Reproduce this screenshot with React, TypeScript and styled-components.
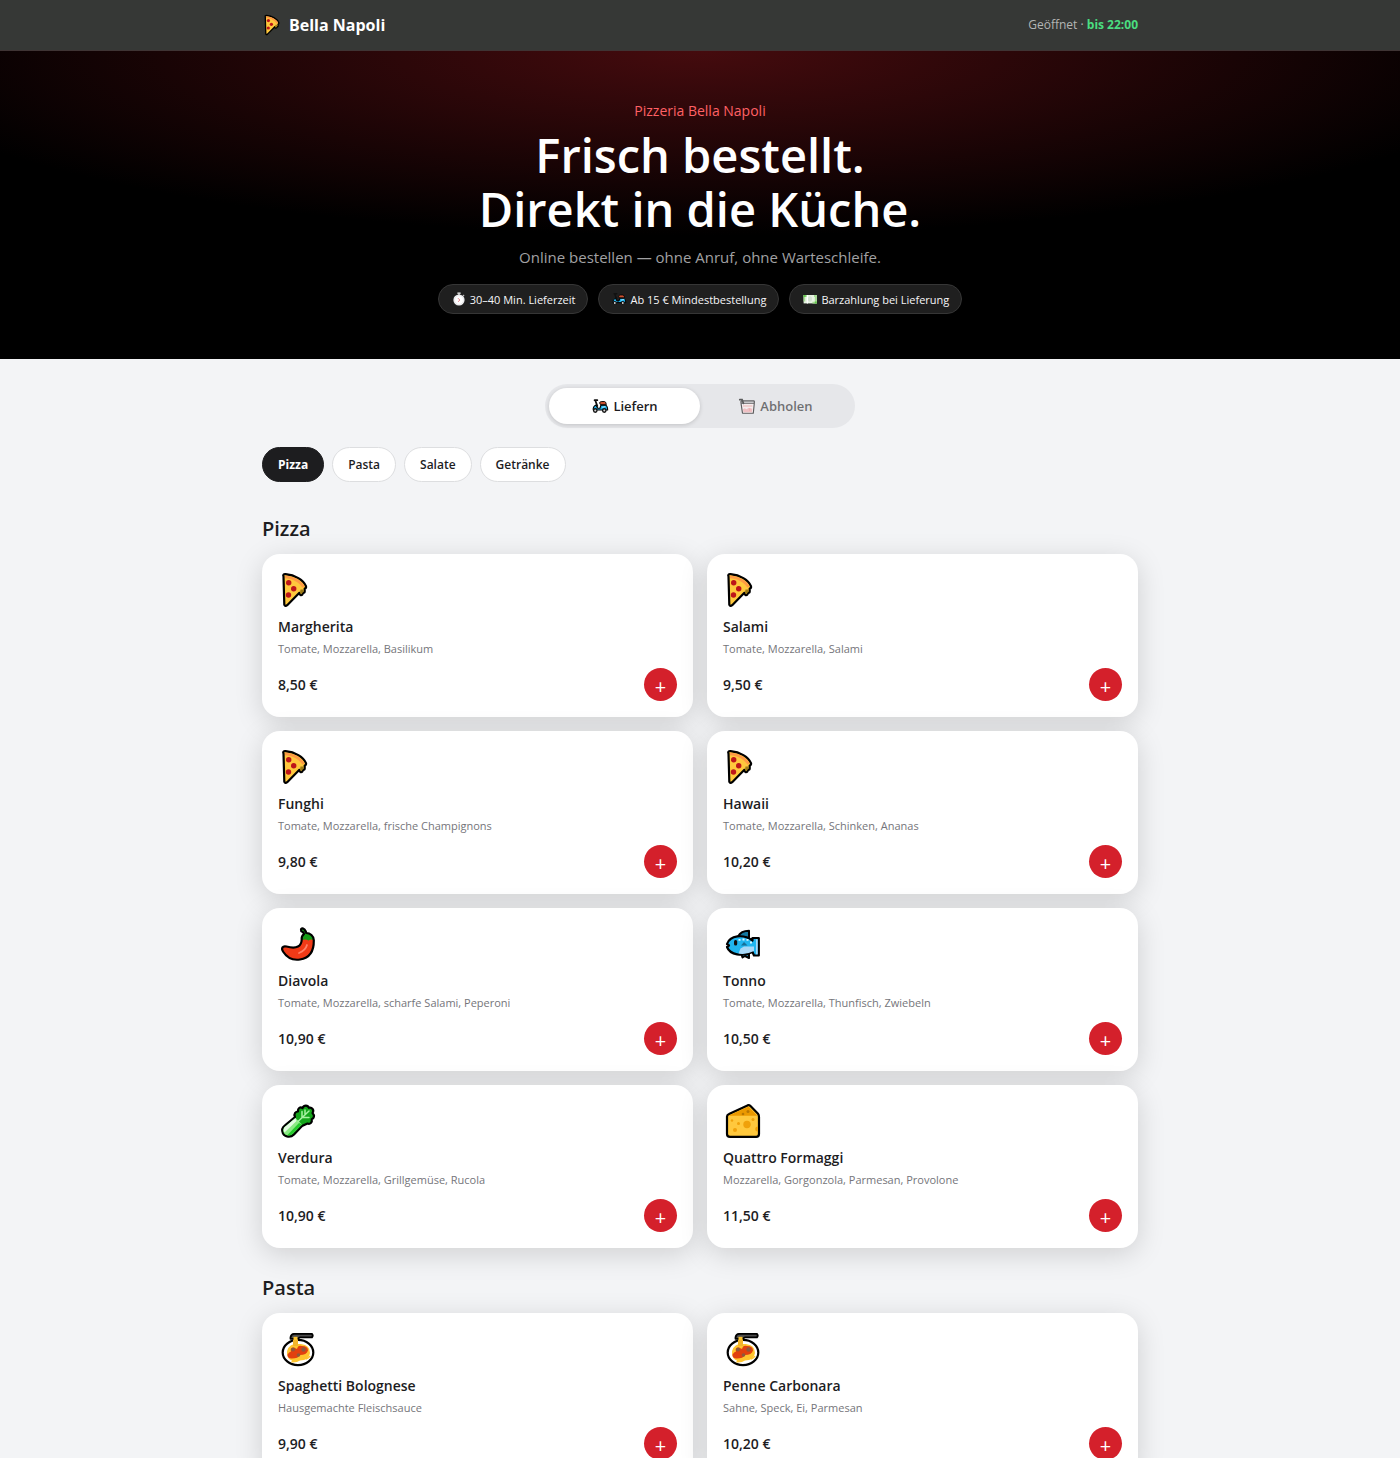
import React, { useState } from "react";
import styled, { createGlobalStyle, css } from "styled-components";

const GlobalStyle = createGlobalStyle`
  *, *::before, *::after { box-sizing: border-box; }
  body {
    margin: 0;
    background: #f3f4f6;
    color: #1d1d1f;
    font-family: "Segoe UI", "Open Sans", "Noto Sans", sans-serif;
    font-size: 14px;
  }
  h1, h2, h3, p { margin: 0; }
  button { font: inherit; color: inherit; border: 0; cursor: pointer; }
`;

const Container = styled.div`
  width: min(876px, 100% - 32px);
  margin: 0 auto;
`;

const TopBar = styled.header`
  background: #363836;
  border-bottom: 1px solid #3f3434;
`;

const TopBarInner = styled(Container)`
  display: flex;
  align-items: center;
  justify-content: space-between;
  height: 50px;
`;

const Brand = styled.a`
  display: flex;
  align-items: center;
  gap: 3px;
  color: #fff;
  font-size: 16px;
  font-weight: 700;
  text-decoration: none;
`;

const OpenStatus = styled.p`
  color: #b4b5b4;
  font-size: 12px;
  line-height: 18px;

  strong {
    color: #4ade80;
    font-weight: 700;
  }
`;

const Hero = styled.section`
  display: flex;
  flex-direction: column;
  align-items: center;
  padding: 50px 16px 45px;
  background: radial-gradient(ellipse 60% 60% at 50% 0, #450b0e, #000) #000;
  text-align: center;
`;

const Eyebrow = styled.p`
  color: #ff6165;
  font-size: 14px;
  line-height: 20px;
`;

const HeroTitle = styled.h1`
  margin-top: 7px;
  color: #fff;
  font-size: 47px;
  font-weight: 600;
  line-height: 54px;
`;

const HeroText = styled.p`
  margin-top: 8px;
  color: #a1a1a3;
  font-size: 15px;
  line-height: 26px;
`;

const FactList = styled.ul`
  display: flex;
  flex-wrap: wrap;
  justify-content: center;
  gap: 10px;
  margin: 14px 0 0;
  padding: 0;
  list-style: none;
`;

const Fact = styled.li`
  display: flex;
  align-items: center;
  gap: 3px;
  height: 30px;
  padding: 0 12px;
  border: 1px solid #363636;
  border-radius: 15px;
  background: #1f1f1f;
  color: #f5f5f7;
  font-size: 11px;
  font-weight: 500;
`;

const Main = styled(Container).attrs({ as: "main" })`
  padding-top: 25px;
`;

const ModeSwitch = styled.div`
  display: grid;
  grid-template-columns: 1fr 1fr;
  width: min(310px, 100%);
  margin: 0 auto;
  padding: 4px;
  border-radius: 22px;
  background: #e6e7ea;
`;

const ModeButton = styled.button<{ $active: boolean }>`
  display: flex;
  align-items: center;
  justify-content: center;
  gap: 4px;
  height: 36px;
  border-radius: 18px;
  background: transparent;
  font-size: 13px;
  font-weight: 600;
  opacity: 0.6;

  ${({ $active }) =>
    $active &&
    css`
      background: #fff;
      box-shadow: 0 1px 4px rgba(0, 0, 0, 0.16);
      opacity: 1;
    `}
`;

const CategoryNav = styled.nav`
  display: flex;
  flex-wrap: wrap;
  gap: 8px;
  margin: 19px 0 7px;
`;

const CategoryLink = styled.a<{ $active: boolean }>`
  display: flex;
  align-items: center;
  height: 35px;
  padding: 0 15px;
  border: 1px solid ${({ $active }) => ($active ? "#1d1d1f" : "#dddee0")};
  border-radius: 18px;
  background: ${({ $active }) => ($active ? "#1d1d1f" : "#fff")};
  color: ${({ $active }) => ($active ? "#fff" : "#1d1d1f")};
  font-size: 12px;
  font-weight: ${({ $active }) => ($active ? 700 : 600)};
  text-decoration: none;
`;

const MenuSection = styled.section`
  padding-top: 25px;
`;

const SectionTitle = styled.h2`
  margin-bottom: 10px;
  font-size: 20px;
  font-weight: 600;
  line-height: 30px;
`;

const CardGrid = styled.div`
  display: grid;
  grid-template-columns: repeat(auto-fit, minmax(min(320px, 100%), 1fr));
  gap: 14px;
`;

const Card = styled.article`
  display: flex;
  flex-direction: column;
  padding: 16px;
  border-radius: 18px;
  background: #fff;
  box-shadow: 0 6px 28px rgba(0, 0, 0, 0.15);
`;

const DishName = styled.h3`
  margin-top: 6px;
  font-size: 14px;
  font-weight: 600;
  line-height: 22px;
`;

const DishText = styled.p`
  margin-top: 2px;
  color: #75757a;
  font-size: 11px;
  line-height: 18px;
`;

const CardFooter = styled.div`
  display: flex;
  align-items: center;
  justify-content: space-between;
  margin-top: 10px;
`;

const Price = styled.span`
  font-size: 14px;
  font-weight: 600;
`;

const AddButton = styled.button`
  display: grid;
  place-items: center;
  width: 33px;
  height: 33px;
  padding: 4px 0 0;
  border-radius: 50%;
  background: #d4202b;
  color: #fff;
  font-size: 20px;
  line-height: 20px;
`;

const IconSvg = styled.svg<{ $size: number }>`
  display: block;
  flex: none;
  width: ${({ $size }) => $size}px;
  height: ${({ $size }) => $size}px;
`;

type IconName =
  | "pizza" | "chili" | "fish" | "greens" | "cheese" | "pasta"
  | "scooter" | "watch" | "cash" | "box";

const drawings: Record<IconName, React.ReactNode> = {
  pizza: (
    <>
      <path d="M5.500 6.500Q4.400 3.900 7.600 4.200C17 5 25.500 10 28 16.200Q28.500 18 26.700 18.600V21.500Q26.500 23.200 25 22.700Q24.600 25.600 22.600 25.200Q21.600 25 21.400 22.800L9.200 35.200Q7.300 36.700 6.300 34.800Z" fill="#ffc83d" stroke="#000" strokeWidth="2.200" strokeLinejoin="round" />
      <path d="M7 5.400C16 6.200 24 10.500 26.700 16.500L24.300 17.600C21 11.800 14 8.600 7 8.200Z" fill="#ff9a45" />
      <path d="M22.500 19.500h3v2.200l-2 2.300-1.500-1.500z" fill="#9b7a16" />
      <circle cx="10.700" cy="12.700" r="2.700" fill="#bd1519" />
      <circle cx="15.700" cy="18.800" r="2.700" fill="#bd1519" />
      <circle cx="10.500" cy="25" r="2.700" fill="#bd1519" />
    </>
  ),
  chili: (
    <>
      <path d="M24 15C23.500 22 19 25.500 8.500 22.500C4.500 21.500 3 24.300 5 27.500C9 33.800 15.500 36.500 22 35.500C31.500 34 36 27 35.800 15.500L31 11Z" fill="#f03a17" />
      <path d="M23 5.200Q24.500 3.500 26.500 5.500Q28 7.500 28.300 9C32 9 35.800 12 35.800 16.200Q33 14.500 30.500 16.500Q27 14.300 23.700 16.500Q23.300 12 26 9.800Q25.500 8 23.300 7.300Z" fill="#159d17" />
      <path d="M23 5.200Q24.500 3.500 26.500 5.500Q28 7.500 28.300 9C32 9 35.800 12 35.800 16.200C36 27 31.500 34 22 35.500C15.500 36.500 9 33.800 5 27.500C3 24.300 4.500 21.500 8.500 22.500C19 25.500 23.500 22 23.700 15.500Q23.300 12 26 9.800Q25.500 8 23.300 7.300Z" fill="none" stroke="#000" strokeWidth="2.200" strokeLinejoin="round" />
      <path d="M29 21Q27.500 26.500 21 29" fill="none" stroke="#ff8067" strokeWidth="1.800" strokeLinecap="round" />
    </>
  ),
  fish: (
    <>
      <path d="M15 12.500Q18 6.800 26 6.800V14Z" fill="#14779e" stroke="#000" strokeWidth="2" strokeLinejoin="round" />
      <path d="M18 29L19.500 33.500L22 32L26 34V27Z" fill="#14779e" stroke="#000" strokeWidth="2" strokeLinejoin="round" />
      <path d="M4 20C7 11.500 20 9.500 29.500 16.500V14H35.800V31.500H31L29.500 28C19.500 33 7 31 4 23L6 21.500Z" fill="#20b5ef" stroke="#000" strokeWidth="2.200" strokeLinejoin="round" />
      <path d="M15.500 29.600L17.500 24.500L21 22.500H31V27Q23 31 15.500 29.600M33 15.200H34.700V30.300H33Z" fill="#a9d8f7" />
      <path d="M18 21.500L21 18L24.500 21.500Z" fill="#176f98" />
      <rect x="11" y="16" width="3.200" height="5.500" rx="1.500" fill="#111" />
      <path d="M15.500 15.800h2M19.500 15.500h2M23.500 15.800h2M27 18.500h2" stroke="#dff6ff" strokeWidth="1.800" />
    </>
  ),
  greens: (
    <>
      <path d="M17 16C15.300 12.500 18 10.500 20 10.500C19.500 7 22.500 5.500 24.500 7C26 3.500 30 4 30.800 6.800C34 6 36.500 9 34.500 12C37 14.500 36 17.500 33.700 18.300C34.500 21.500 32 23.500 29.500 22.500L24 25L16 33.500C12.500 37 7 36 5 32.500C3.500 29 4.500 26 7 24.300Z" fill="#14a51b" stroke="#000" strokeWidth="2.200" strokeLinejoin="round" />
      <path d="M17.500 17L24 23.500L14.800 32.500C11.500 35.500 7.500 34.500 6 32C4.500 29 5.500 26.500 8 25Z" fill="#8bea83" />
      <path d="M17.500 17L8 25C5.500 26.500 5 29.500 6.500 31.500L18.500 20Z" fill="#e4fbe3" />
      <path d="M24 23.500L14.800 32.500C13 34.200 11 34.700 9.200 34.300L21 22Z" fill="#25c92c" />
      <path d="M20 20.500L31 10M24 16.500V10.500M27 13.500L27 9M24.500 16.500H31" stroke="#a6f1a1" strokeWidth="1.500" strokeLinecap="round" />
    </>
  ),
  cheese: (
    <>
      <path d="M4 15.500Q4 13.800 6 13L24.500 4.400Q26.200 3.800 27.500 5L35 12.800Q36 14 36 16V33Q36 35.800 33.200 35.800H7Q4 35.800 4 33Z" fill="#ffc83d" stroke="#000" strokeWidth="2.200" strokeLinejoin="round" />
      <path d="M5.500 14.700L25.500 5.500L34.300 14.700Z" fill="#eb9900" />
      <circle cx="25" cy="10.500" r="1.500" fill="#b97600" />
      <circle cx="20" cy="13" r="1.300" fill="#b97600" />
      <g fill="#f0a10b">
        <circle cx="24" cy="23.500" r="3.700" />
        <circle cx="15.500" cy="22.500" r="1.500" />
        <circle cx="9" cy="19.500" r="1.200" />
        <circle cx="12" cy="29" r="2" />
        <circle cx="30" cy="18.500" r="1.500" />
        <path d="M34.800 25.500a2.500 2.500 0 0 0 0 5z" />
      </g>
    </>
  ),
  pasta: (
    <>
      <ellipse cx="20" cy="23.500" rx="15.300" ry="12.600" fill="#fff" stroke="#000" strokeWidth="2.200" />
      <path d="M16 15Q8.500 17.500 9 25Q10 30.500 14 31.500L13 33.500Q19 34 22 31.500Q31 31.500 32 24Q32 16 23 15Z" fill="#ffc52e" />
      <path d="M28 30Q31 29 32 27" stroke="#ffc52e" strokeWidth="1.500" fill="none" />
      <path d="M13 22.500Q11.500 18.500 16 18.500L19 20Q20 15.500 24 17Q30 17 30 21.500Q28.500 26 22 26Q20 29.800 13 29.500Q9 29 9.500 25.500Q11 23 13 22.500Z" fill="#e2400f" />
      <circle cx="15" cy="20.500" r="2" fill="#8d5a3c" />
      <circle cx="25.500" cy="20.500" r="2.200" fill="#8d5a3c" />
      <circle cx="20.500" cy="26" r="1.800" fill="#8d5a3c" />
      <path d="M15 8H20V17H15Z" fill="#f2b52a" />
      <path d="M12.500 8.500Q13 5 16 4.800H34Q35.500 6.500 34 8.300H22Q20 10.300 12.500 9.800Z" fill="#4d4d4d" stroke="#000" strokeWidth="1.800" strokeLinejoin="round" />
      <path d="M15.500 7.800H19.500V11H15.500Z" fill="#ffc52e" />
    </>
  ),
  scooter: (
    <>
      <path d="M10 9L14 20" stroke="#111" strokeWidth="4" strokeLinecap="round" />
      <path d="M8 7H14" stroke="#111" strokeWidth="4" strokeLinecap="round" />
      <path d="M11 18L15 25H20L22 18H32Q37 20 37 29H5Q4 21 11 18Z" fill="#1cb3ee" stroke="#000" strokeWidth="2.500" strokeLinejoin="round" />
      <path d="M19 13Q20 10 24 10H30Q34 11 34 17H21Z" fill="#c9502f" stroke="#000" strokeWidth="2" />
      <path d="M25 23L32 21" stroke="#a1e3ff" strokeWidth="2.500" />
      <circle cx="9.500" cy="30" r="3.800" fill="#d8d8d8" stroke="#111" strokeWidth="3" />
      <circle cx="29.500" cy="30" r="3.800" fill="#d8d8d8" stroke="#111" strokeWidth="3" />
    </>
  ),
  watch: (
    <>
      <path d="M16 3.500h8v4h-8z" fill="#d5d5d5" />
      <path d="M18 7h4v4h-4zM31 9l3 3-3 2-2-2z" fill="#bcbcbc" />
      <circle cx="20" cy="22.500" r="14" fill="#f1f1f3" />
      <circle cx="20" cy="22.500" r="11" fill="#fff" stroke="#e2e2e6" strokeWidth="1.500" />
      <path d="M17.500 18L22 22.500L18 27" fill="none" stroke="#e37a82" strokeWidth="2.400" />
    </>
  ),
  cash: (
    <>
      <path d="M4 10H37V31H4Z" fill="#e7f3e2" />
      <path d="M4 10H13V15H8V26H4ZM30 10H37V31H26V27H32V15H30Z" fill="#a5dd93" />
      <path d="M4 10H9V15H4ZM32 26H37V31H32Z" fill="#5fc548" />
      <ellipse cx="20" cy="20" rx="5" ry="7" fill="#d3dfd1" />
      <path d="M12 10H15V31H12Z" fill="#fff" />
    </>
  ),
  box: (
    <>
      <path d="M7 9H36V16L34 36H10L7 16Z" fill="#fff3f3" stroke="#000" strokeWidth="2.500" strokeLinejoin="round" />
      <path d="M7 9H36V14H7Z" fill="#d8d8dc" stroke="#000" strokeWidth="2" strokeLinejoin="round" />
      <path d="M4 6H9L12 14" fill="none" stroke="#000" strokeWidth="4" strokeLinecap="round" />
      <path d="M11 27L15 25L19 27L24 24L32 26L31 34H12Z" fill="#f6a7ab" />
      <path d="M11 20H32M26 25V31" stroke="#ef8a85" strokeWidth="2" />
    </>
  ),
};

function Icon({ name, size = 40 }: { name: IconName; size?: number }) {
  return (
    <IconSvg $size={size} viewBox="0 0 40 40" aria-hidden="true">
      {drawings[name]}
    </IconSvg>
  );
}

type Dish = { icon: IconName; name: string; text: string; price: string };

const menu: { id: string; title: string; dishes: Dish[] }[] = [
  {
    id: "pizza",
    title: "Pizza",
    dishes: [
      { icon: "pizza", name: "Margherita", text: "Tomate, Mozzarella, Basilikum", price: "8,50 €" },
      { icon: "pizza", name: "Salami", text: "Tomate, Mozzarella, Salami", price: "9,50 €" },
      { icon: "pizza", name: "Funghi", text: "Tomate, Mozzarella, frische Champignons", price: "9,80 €" },
      { icon: "pizza", name: "Hawaii", text: "Tomate, Mozzarella, Schinken, Ananas", price: "10,20 €" },
      { icon: "chili", name: "Diavola", text: "Tomate, Mozzarella, scharfe Salami, Peperoni", price: "10,90 €" },
      { icon: "fish", name: "Tonno", text: "Tomate, Mozzarella, Thunfisch, Zwiebeln", price: "10,50 €" },
      { icon: "greens", name: "Verdura", text: "Tomate, Mozzarella, Grillgemüse, Rucola", price: "10,90 €" },
      { icon: "cheese", name: "Quattro Formaggi", text: "Mozzarella, Gorgonzola, Parmesan, Provolone", price: "11,50 €" },
    ],
  },
  {
    id: "pasta",
    title: "Pasta",
    dishes: [
      { icon: "pasta", name: "Spaghetti Bolognese", text: "Hausgemachte Fleischsauce", price: "9,90 €" },
      { icon: "pasta", name: "Penne Carbonara", text: "Sahne, Speck, Ei, Parmesan", price: "10,20 €" },
    ],
  },
];

const categories = [
  { id: "pizza", label: "Pizza" },
  { id: "pasta", label: "Pasta" },
  { id: "salate", label: "Salate" },
  { id: "getraenke", label: "Getränke" },
];

const modes: { id: string; label: string; icon: IconName }[] = [
  { id: "liefern", label: "Liefern", icon: "scooter" },
  { id: "abholen", label: "Abholen", icon: "box" },
];

const facts: { icon: IconName; label: string }[] = [
  { icon: "watch", label: "30–40 Min. Lieferzeit" },
  { icon: "scooter", label: "Ab 15 € Mindestbestellung" },
  { icon: "cash", label: "Barzahlung bei Lieferung" },
];

export default function App() {
  const [mode, setMode] = useState("liefern");
  const [category, setCategory] = useState("pizza");

  return (
    <>
      <GlobalStyle />
      <TopBar>
        <TopBarInner>
          <Brand href="#">
            <Icon name="pizza" size={24} />
            Bella Napoli
          </Brand>
          <OpenStatus>
            Geöffnet · <strong>bis 22:00</strong>
          </OpenStatus>
        </TopBarInner>
      </TopBar>

      <Hero>
        <Eyebrow>Pizzeria Bella Napoli</Eyebrow>
        <HeroTitle>
          Frisch bestellt.
          <br />
          Direkt in die Küche.
        </HeroTitle>
        <HeroText>Online bestellen — ohne Anruf, ohne Warteschleife.</HeroText>
        <FactList>
          {facts.map((fact) => (
            <Fact key={fact.label}>
              <Icon name={fact.icon} size={16} />
              {fact.label}
            </Fact>
          ))}
        </FactList>
      </Hero>

      <Main>
        <ModeSwitch role="group" aria-label="Bestellart">
          {modes.map((m) => (
            <ModeButton
              key={m.id}
              type="button"
              $active={mode === m.id}
              aria-pressed={mode === m.id}
              onClick={() => setMode(m.id)}
            >
              <Icon name={m.icon} size={18} />
              {m.label}
            </ModeButton>
          ))}
        </ModeSwitch>

        <CategoryNav aria-label="Kategorien">
          {categories.map((c) => (
            <CategoryLink
              key={c.id}
              href={`#${c.id}`}
              $active={category === c.id}
              onClick={() => setCategory(c.id)}
            >
              {c.label}
            </CategoryLink>
          ))}
        </CategoryNav>

        {menu.map((section) => (
          <MenuSection key={section.id} id={section.id}>
            <SectionTitle>{section.title}</SectionTitle>
            <CardGrid>
              {section.dishes.map((dish) => (
                <Card key={dish.name}>
                  <Icon name={dish.icon} />
                  <DishName>{dish.name}</DishName>
                  <DishText>{dish.text}</DishText>
                  <CardFooter>
                    <Price>{dish.price}</Price>
                    <AddButton type="button" aria-label={`${dish.name} hinzufügen`}>
                      +
                    </AddButton>
                  </CardFooter>
                </Card>
              ))}
            </CardGrid>
          </MenuSection>
        ))}
      </Main>
    </>
  );
}
